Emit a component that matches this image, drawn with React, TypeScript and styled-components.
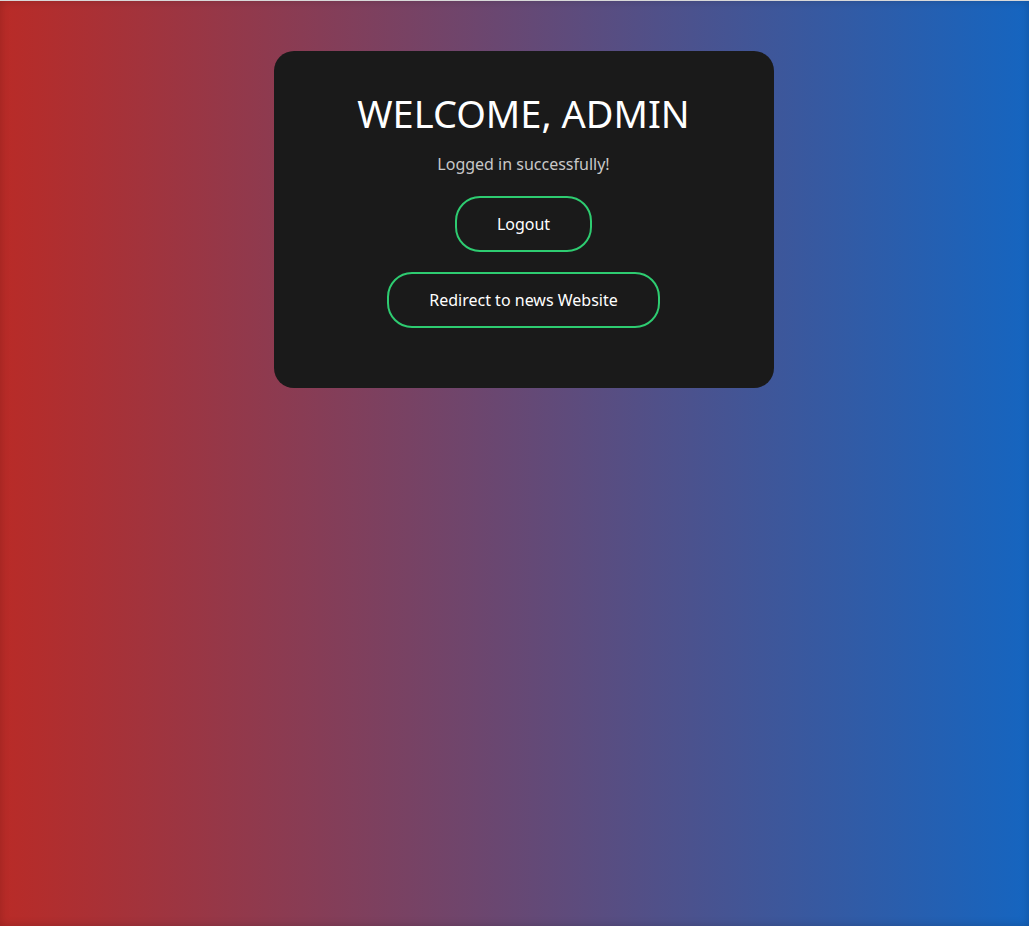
import React from "react";
import styled, { createGlobalStyle } from "styled-components";

const Global = createGlobalStyle`
  html, body {
    margin: 0;
    padding: 0;
  }
  body {
    font-family: "Noto Sans", "Open Sans", sans-serif;
  }
`;

const Page = styled.div`
  box-sizing: border-box;
  min-height: 926px;
  border-top: 1px solid #d8d8d8;
  background: linear-gradient(to right, #b92b27, #1565c0);
  box-shadow: inset 0 0 10px rgba(0, 0, 0, 0.18);
  padding: 50px 0 0 18px;
`;

const Card = styled.div`
  box-sizing: border-box;
  width: 500px;
  margin: 0 auto;
  background: #1a1a1a;
  border-radius: 20px;
  padding: 36px 40px 60px;
  display: flex;
  flex-direction: column;
  align-items: center;
  text-align: center;
`;

const Title = styled.h1`
  margin: 0 0 14px;
  font-size: 38px;
  font-weight: 400;
  color: #ffffff;
`;

const Subtitle = styled.p`
  margin: 0 0 21px;
  font-size: 16px;
  color: #c8c8c8;
`;

const Actions = styled.div`
  display: flex;
  flex-direction: column;
  align-items: center;
  gap: 20px;
`;

const OutlineButton = styled.button`
  font-family: "Noto Sans", "Open Sans", sans-serif;
  font-size: 16px;
  color: #ffffff;
  background: transparent;
  border: 2px solid #2ecc71;
  border-radius: 25px;
  padding: 15px 40px;
  line-height: 22px;
  cursor: pointer;
`;

export default function App() {
  return (
    <>
      <Global />
      <Page>
        <Card>
          <Title>WELCOME, ADMIN</Title>
          <Subtitle>Logged in successfully!</Subtitle>
          <Actions>
            <OutlineButton>Logout</OutlineButton>
            <OutlineButton>Redirect to news Website</OutlineButton>
          </Actions>
        </Card>
      </Page>
    </>
  );
}
